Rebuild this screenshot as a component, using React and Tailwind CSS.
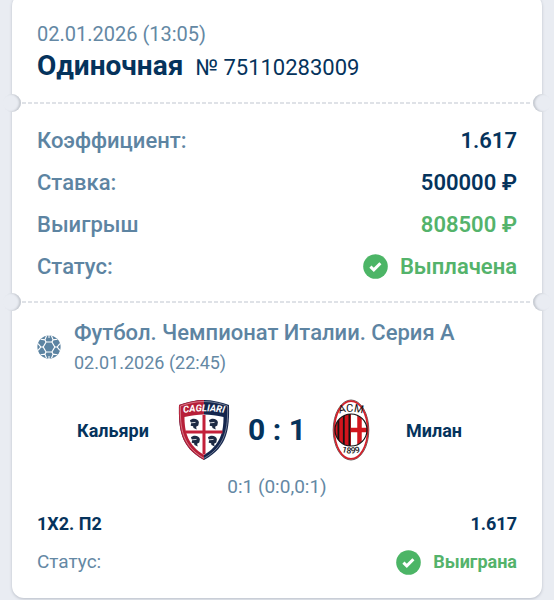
import React from "react";

function Check() {
  return (
    <svg className="size-[25px] shrink-0" viewBox="0 0 25 25" aria-hidden="true">
      <circle cx="12.5" cy="12.5" r="12.3" fill="#4cb566" />
      <path d="M7.4 12.6l3.4 3.3 6.6-6.6" fill="none" stroke="#fff" strokeWidth="3" />
    </svg>
  );
}

function Ball() {
  return (
    <svg className="size-6 shrink-0" viewBox="-12 -12 24 24" aria-hidden="true">
      <circle r="11.6" fill="#5d84a2" />
      <path d="M-2.900 -5H2.900L5.800 0L2.900 5H-2.900L-5.800 0z" fill="none" stroke="#fff" strokeWidth="1.200" />
      {[30, 90, 150, 210, 270, 330].map((a) => (
        <g key={a} transform={`rotate(${a})`}>
          <path d="M0 -5.800V-8.200M-3.400 -10.900L0 -8.200L3.400 -10.900" fill="none" stroke="#fff" strokeWidth="1.200" />
        </g>
      ))}
      <path d="M0 -12V-9M0 12V9" stroke="#fff" strokeWidth="1" />
    </svg>
  );
}

function Moor({ x, y }) {
  return (
    <g transform={`translate(${x} ${y})`}>
      <path d="M-4.600 -3.600C-2.500 -6.400 4 -5.800 4.400 -1.800L3.800 1.600 1.600 2.800 2.200 5.400 -1 4 -1.400 2.200 -3.800 1.800 -3.400 -1z" fill="#1c2a44" />
      <path d="M-3.400 -1.200L1 -1.600" stroke="#fff" strokeWidth="0.800" />
    </g>
  );
}

function Cagliari() {
  return (
    <svg className="h-[62px] w-[52px]" viewBox="0 0 52 62" role="img" aria-label="Cagliari">
      <path d="M26 1C34 1 43 3 51 6C51.5 29 50 48 26 61C2 48 .5 29 1 6C9 3 18 1 26 1z" fill="#14264d" />
      <path d="M26 1C18 1 9 3 1 6C.5 29 2 48 26 61z" fill="#b71f38" />
      <path d="M26 2.5C34 2.5 42 4.2 49.6 7C50 29 48 47 26 59.3C4 47 2 29 2.4 7C10 4.2 18 2.5 26 2.5z" fill="none" stroke="#fff" strokeWidth="0.4" />
      <path d="M6.500 18C20 14.500 32 14.500 45.500 18C45.500 34 42 46 26 56C10 46 6.500 34 6.500 18z" fill="#fff" />
      <path d="M26 16V55.500M7.500 33H44.500" stroke="#c3203a" strokeWidth="3" />
      <Moor x={16.500} y={25} />
      <Moor x={35.500} y={25} />
      <Moor x={17.500} y={42} />
      <Moor x={34.500} y={42} />
      <path id="crest-arc" d="M3 14.500Q26 10 49 14.500" fill="none" />
      <text fill="#fff" fontSize="9.500" fontWeight="700" fontStyle="italic" fontFamily="Roboto, sans-serif" textAnchor="middle">
        <textPath href="#crest-arc" startOffset="50%">CAGLIARI</textPath>
      </text>
    </svg>
  );
}

function Milan() {
  return (
    <svg className="h-[62px] w-[38px]" viewBox="0 0 38 62" role="img" aria-label="Milan">
      <defs>
        <clipPath id="disc"><circle cx="19" cy="31" r="16" /></clipPath>
      </defs>
      <ellipse cx="19" cy="31" rx="17.800" ry="30" fill="#fff" stroke="#333" strokeWidth="0.800" />
      <ellipse cx="19" cy="31" rx="16.700" ry="28.900" fill="none" stroke="#d2202a" strokeWidth="1.800" />
      <g clipPath="url(#disc)">
        <path d="M3 14H19V48H3z" fill="#d2151d" />
        <path d="M6.400 14V48M11.800 14V48M17.400 14V48" stroke="#161213" strokeWidth="1.800" />
        <path d="M19 14H36V48H19z" fill="#fff" />
        <path d="M27.500 14V48M19 31H36" stroke="#d2151d" strokeWidth="4.500" />
      </g>
      <circle cx="19" cy="31" r="16" fill="none" stroke="#161213" strokeWidth="1.200" />
      <path id="acm-arc" d="M4 16Q19 9.500 34 16" fill="none" />
      <path id="year-arc" d="M5 51Q19 58 33 51" fill="none" />
      <g fill="#161213" fontFamily="Roboto, sans-serif" textAnchor="middle">
        <text fontSize="11"><textPath href="#acm-arc" startOffset="50%">ACM</textPath></text>
        <text fontSize="8.500" fontWeight="500"><textPath href="#year-arc" startOffset="50%">1899</textPath></text>
      </g>
    </svg>
  );
}

function Divider() {
  return (
    <div className="relative flex h-[18px] items-center px-2.5" aria-hidden="true">
      <span className="absolute top-0 -left-[9px] size-[18px] rounded-full bg-[#e9ecf2] shadow-[inset_-2px_0_2px_#c6cad1]" />
      <div className="h-0.5 w-full bg-[repeating-linear-gradient(90deg,#dfe2e7_0_4px,transparent_4px_6px)]" />
      <span className="absolute top-0 -right-[9px] size-[18px] rounded-full bg-[#e9ecf2] shadow-[inset_2px_0_2px_#c6cad1]" />
    </div>
  );
}

function Row({ label, green, children }) {
  return (
    <div className="flex h-[42px] items-center justify-between text-[22px]">
      <dt className="font-medium text-[#5d84a2]">{label}</dt>
      <dd className={green ? "flex items-center gap-3 font-semibold text-[#54b36b]" : "font-semibold text-[#05335c]"}>{children}</dd>
    </div>
  );
}

export default function App() {
  return (
    <main className="min-h-screen bg-[#e9ecf2] px-3 pb-[3px] font-['Roboto','Noto_Sans',sans-serif] text-[#05335c]">
      <div className="flow-root">
        <article className="-mt-1.5 rounded-xl bg-white shadow-[0_1px_3px_#b9bec8]">
          <header className="px-[25px] pt-7 pb-2">
            <time className="block text-[20px] leading-6 text-[#6488a4]">02.01.2026 (13:05)</time>
            <div className="mt-0.5 flex items-baseline gap-3 leading-9">
              <h1 className="text-[28px] font-bold">Одиночная</h1>
              <span className="text-[22px]">№ 75110283009</span>
            </div>
          </header>
          <Divider />
          <dl className="px-[25px] pt-[7px] pb-1.5">
            <Row label="Коэффициент:">1.617</Row>
            <Row label="Ставка:">500000 ₽</Row>
            <Row label="Выигрыш" green>808500 ₽</Row>
            <Row label="Статус:" green><Check />Выплачена</Row>
          </dl>
          <Divider />
          <section className="px-[25px] pt-1.5 pb-[22px]">
            <div className="flex items-center gap-[13px]">
              <Ball />
              <div>
                <h2 className="text-[22px] leading-8 font-medium text-[#5d84a2]">Футбол. Чемпионат Италии. Серия А</h2>
                <time className="block text-[18px] leading-7 text-[#6488a4]">02.01.2026 (22:45)</time>
              </div>
            </div>
            <div className="mt-[22px] grid grid-cols-[1fr_auto_1fr] items-center">
              <div className="flex items-center justify-between pl-10">
                <span className="text-[18px] font-bold">Кальяри</span>
                <Cagliari />
              </div>
              <strong className="px-[18px] text-[30px] leading-none">0 : 1</strong>
              <div className="flex items-center justify-between pr-[55px] pl-2">
                <Milan />
                <span className="text-[18px] font-bold">Милан</span>
              </div>
            </div>
            <p className="mt-3 text-center text-[19px] leading-7 text-[#6488a4]">0:1 (0:0,0:1)</p>
            <div className="mt-[9px] flex justify-between text-[18px] leading-7 font-bold">
              <span>1X2. П2</span>
              <span>1.617</span>
            </div>
            <div className="mt-2.5 flex items-center justify-between text-[18px] leading-7">
              <span className="text-[19px] text-[#6488a4]">Статус:</span>
              <span className="flex items-center gap-3 font-bold text-[#54b36b]"><Check />Выиграна</span>
            </div>
          </section>
        </article>
      </div>
    </main>
  );
}
